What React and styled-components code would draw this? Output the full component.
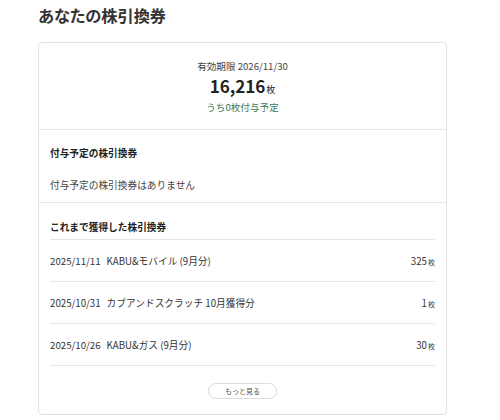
import React from "react";
import styled, { createGlobalStyle } from "styled-components";

const GlobalStyle = createGlobalStyle`
  body {
    margin: 0;
    background: #fff;
    color: #333;
    font-family: "Noto Sans CJK JP", "Noto Sans", sans-serif;
  }
`;

const Page = styled.div`
  padding: 0 53px 0 38px;
`;

const Title = styled.h1`
  margin: 3px 0 0;
  font-size: 16.2px;
  font-weight: 700;
  line-height: 24px;
  color: #333;
  font-feature-settings: "palt";
`;

const Card = styled.div`
  margin-top: 15px;
  border: 1px solid #e2e2e2;
  border-radius: 4px;
  background: #fff;
`;

const Summary = styled.div`
  display: flex;
  flex-direction: column;
  align-items: center;
  padding: 17px 0 16px;
  border-bottom: 1px solid #e6e6e6;
`;

const Expiry = styled.div`
  font-size: 9.6px;
  line-height: 12px;
  color: #444;
`;

const Total = styled.div`
  margin-top: 3px;
  font-size: 17px;
  font-weight: 700;
  line-height: 22px;
  color: #222;

  & small {
    font-size: 9px;
    font-weight: 400;
    margin-left: 1px;
  }
`;

const Pending = styled.div`
  font-size: 9.6px;
  line-height: 12px;
  color: #3d7a5b;
`;

const Section = styled.div`
  padding: ${props => props.$top}px 11px ${props => props.$bottom}px;
  border-bottom: ${props => (props.$last ? "none" : "1px solid #e6e6e6")};
`;

const SectionTitle = styled.div`
  font-size: 9.7px;
  font-weight: 700;
  line-height: 14px;
  color: #222;
  padding-bottom: ${props => (props.$ruled ? "5px" : "0")};
  border-bottom: ${props => (props.$ruled ? "1px solid #e6e6e6" : "none")};
`;

const Empty = styled.div`
  margin-top: 18px;
  font-size: 9.7px;
  line-height: 14px;
  color: #444;
`;

const Row = styled.div`
  display: flex;
  align-items: center;
  justify-content: space-between;
  height: 41px;
  border-bottom: 1px solid #e6e6e6;
  font-size: 9.7px;
  color: #333;
`;

const RowDate = styled.span`
  margin-right: 6px;
`;

const Amount = styled.span`
  & small {
    font-size: 7px;
    margin-left: 1px;
  }
`;

const MoreWrap = styled.div`
  display: flex;
  justify-content: center;
  padding: 17px 0 0;
`;

const MoreButton = styled.button`
  width: 69px;
  height: 16px;
  padding: 0;
  border: 1px solid #dcdcdc;
  border-radius: 9px;
  background: #fff;
  font-family: inherit;
  font-size: 7px;
  color: #555;
  cursor: pointer;
`;

const history = [
  { date: "2025/11/11", name: "KABU&モバイル (9月分)", count: 325 },
  { date: "2025/10/31", name: "カブアンドスクラッチ 10月獲得分", count: 1 },
  { date: "2025/10/26", name: "KABU&ガス (9月分)", count: 30 },
];

const App = () => {
  return (
    <Page>
      <GlobalStyle />
      <Title>あなたの株引換券</Title>
      <Card>
        <Summary>
          <Expiry>有効期限 2026/11/30</Expiry>
          <Total>
            16,216<small>枚</small>
          </Total>
          <Pending>うち0枚付与予定</Pending>
        </Summary>
        <Section $top={16} $bottom={10}>
          <SectionTitle>付与予定の株引換券</SectionTitle>
          <Empty>付与予定の株引換券はありません</Empty>
        </Section>
        <Section $top={17} $bottom={15} $last>
          <SectionTitle $ruled>これまで獲得した株引換券</SectionTitle>
          {history.map(item => (
            <Row key={item.date}>
              <span>
                <RowDate>{item.date}</RowDate>
                {item.name}
              </span>
              <Amount>
                {item.count}
                <small>枚</small>
              </Amount>
            </Row>
          ))}
          <MoreWrap>
            <MoreButton>もっと見る</MoreButton>
          </MoreWrap>
        </Section>
      </Card>
    </Page>
  );
};

export default App;
